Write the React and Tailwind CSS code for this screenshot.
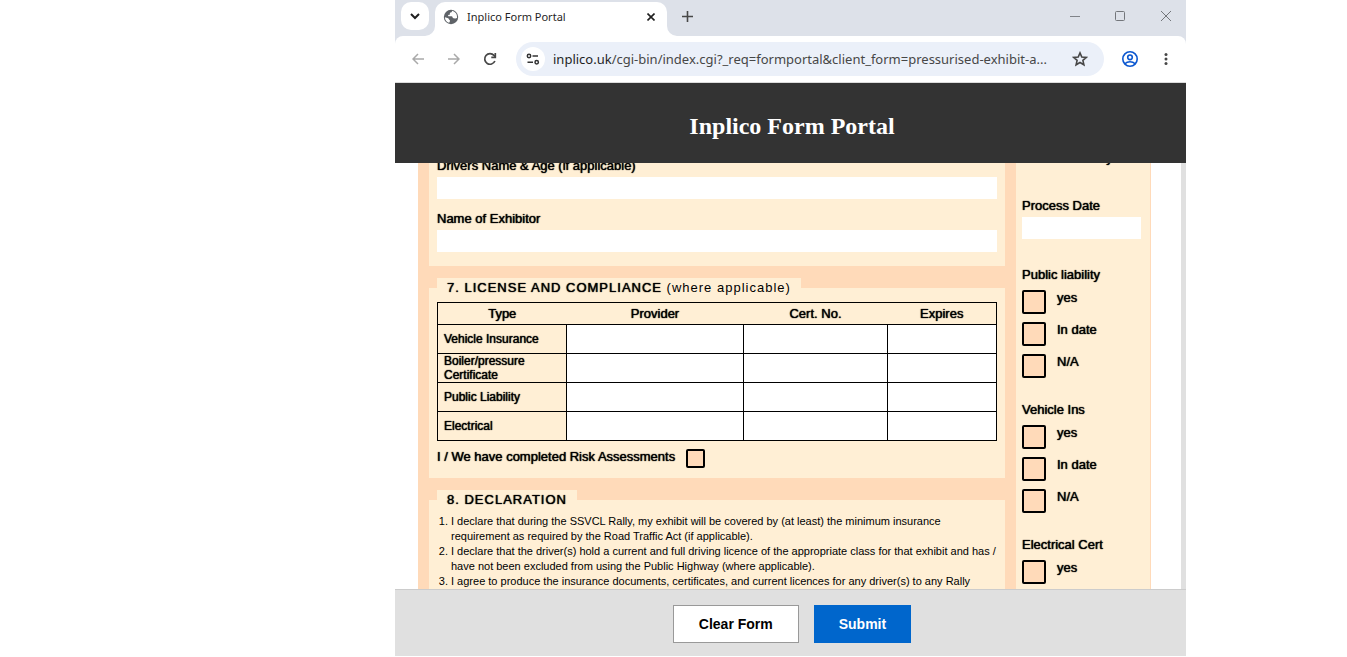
import React, { useState } from "react";

const certRows = ["Vehicle Insurance", "Boiler/pressure Certificate", "Public Liability", "Electrical"];

const certFields = ["Provider", "Cert. No.", "Expires"];

const officeChecks = ["Public liability", "Vehicle Ins", "Electrical Cert"];

const checkOptions = ["yes", "In date", "N/A"];

const declarations = [
  "I declare that during the SSVCL Rally, my exhibit will be covered by (at least) the minimum insurance requirement as required by the Road Traffic Act (if applicable).",
  "I declare that the driver(s) hold a current and full driving licence of the appropriate class for that exhibit and has / have not been excluded from using the Public Highway (where applicable).",
  "I agree to produce the insurance documents, certificates, and current licences for any driver(s) to any Rally",
];

const heavy = "[text-shadow:0_0_1px_#000,0_0_1px_#0006]";

const BrowserBar = () => (
  <div className="shrink-0 bg-[#dde1e9] font-['Noto_Sans',sans-serif]">
    <div className="flex h-9 items-start">
      <button aria-label="Search tabs" className="ml-[6px] mt-[2px] flex size-7 items-center justify-center rounded-[10px] bg-white">
        <svg width="10" height="7" viewBox="0 0 10 7" fill="none" stroke="#1f1f1f" strokeWidth="2">
          <path d="M1 1l4 4 4-4" />
        </svg>
      </button>
      <div className="flex h-9 items-end">
        <svg width="10" height="10" viewBox="0 0 10 10" className="-ml-1" fill="#fff">
          <path d="M10 0v10H0A10 10 0 0 0 10 0z" />
        </svg>
        <div className="flex h-[34px] w-[232px] items-center rounded-t-[10px] bg-white pb-1 pl-2 pr-[10px]">
          <svg width="16" height="16" viewBox="0 0 16 16">
            <circle cx="8" cy="8" r="7.2" fill="#5f6368" />
            <path
              d="M9.2 1.800c-.2 1.200-.8 1.700-1.700 1.800-.7.100-.7.800-.6 1.400 0 .7-.8.900-1.500.9-.6.300-.3 1.300.4 1.300h2.800c.8.1 1 .9 1.100 1.500.4.600 1.300.3 1.900.7.900.3 1.900 0 2.500-.7a6.400 6.400 0 0 0-4.900-6.900z"
              fill="#fff"
            />
            <path d="M1.900 8.300c1 .6 2.300.5 3.300 1 .9.500.6 1.300 1.300 1.700.7.400.6 1.200.2 1.700-.2.500-.5.900-.7 1.100A6.200 6.200 0 0 1 1.900 8.300z" fill="#fff" />
          </svg>
          <span className="ml-2 flex-1 text-[11px] leading-4 text-[#1f1f1f]">Inplico Form Portal</span>
          <button aria-label="Close tab" className="flex size-3 items-center justify-center">
            <svg width="8" height="8" viewBox="0 0 8 8" stroke="#1f1f1f" strokeWidth="1.600">
              <path d="M.5.5l7 7M7.500.5l-7 7" />
            </svg>
          </button>
        </div>
        <svg width="10" height="10" viewBox="0 0 10 10" fill="#fff">
          <path d="M0 0v10h10A10 10 0 0 1 0 0z" />
        </svg>
      </div>
      <button aria-label="New tab" className="flex h-8 w-5 items-center justify-center">
        <svg width="11" height="11" viewBox="0 0 11 11" stroke="#474747" strokeWidth="1.600">
          <path d="M5.500 0v11M0 5.500h11" />
        </svg>
      </button>
      <div className="ml-auto mr-[14px] flex h-8 items-center gap-[35px]">
        <button aria-label="Minimize">
          <svg width="10" height="10" viewBox="0 0 10 10" stroke="#808389">
            <path d="M0 5.500h10" />
          </svg>
        </button>
        <button aria-label="Maximize">
          <svg width="10" height="10" viewBox="0 0 10 10" fill="none" stroke="#73767b">
            <rect x=".5" y=".5" width="9" height="9" rx="1" />
          </svg>
        </button>
        <button aria-label="Close">
          <svg width="12" height="12" viewBox="0 0 12 12" stroke="#73767b">
            <path d="M1 1l10 10M11 1L1 11" />
          </svg>
        </button>
      </div>
    </div>

    <div className="flex h-[47px] items-center rounded-t-lg border-b border-[#dcdcdc] bg-white pl-[17px] pr-[14px]">
      <button aria-label="Back">
        <svg width="12" height="12" viewBox="0 0 12 12" fill="none" stroke="#a9a9a9" strokeWidth="1.500">
          <path d="M12 6H1M6 1L1 6l5 5" />
        </svg>
      </button>
      <button aria-label="Forward" className="ml-6">
        <svg width="12" height="12" viewBox="0 0 12 12" fill="none" stroke="#a9a9a9" strokeWidth="1.500">
          <path d="M0 6h11M6 1l5 5-5 5" />
        </svg>
      </button>
      <button aria-label="Reload" className="ml-[23px]">
        <svg width="14" height="14" viewBox="0 0 14 14" fill="none" stroke="#474747" strokeWidth="1.700">
          <path d="M11.900 9A5.300 5.300 0 1 1 11 3.400L12.600 5" />
          <path d="M12.300 1v4.300H8.300" />
        </svg>
      </button>
      <div className="ml-[19px] flex h-[34px] min-w-0 flex-1 items-center rounded-full bg-[#ebf0f9] pl-[5px] pr-4">
        <button aria-label="Site information" className="flex size-6 shrink-0 items-center justify-center rounded-full bg-white">
          <svg width="14" height="12" viewBox="0 0 14 12" fill="none" stroke="#333" strokeWidth="1.500">
            <circle cx="3" cy="3" r="1.700" />
            <path d="M6.500 3H12M1.500 9.300H7" />
            <circle cx="10.700" cy="9.300" r="1.700" />
          </svg>
        </button>
        <span className="ml-2 min-w-0 flex-1 truncate text-[13px] leading-5 text-[#474747]">
          <span className="text-[#1f1f1f]">inplico.uk</span>/cgi-bin/index.cgi?_req=formportal&amp;client_form=pressurised-exhibit-a...
        </span>
        <button aria-label="Bookmark this tab" className="ml-3">
          <svg width="16" height="16" viewBox="0 0 16 16" fill="none" stroke="#474747" strokeWidth="1.600">
            <path d="M8 1.900l1.800 4.100 4.500.4-3.400 3 1 4.400L8 11.500l-3.900 2.300 1-4.400-3.400-3 4.500-.4z" />
          </svg>
        </button>
      </div>
      <button aria-label="Profile" className="ml-[18px]">
        <svg width="16" height="16" viewBox="0 0 16 16" fill="none" stroke="#0b57d0" strokeWidth="1.600">
          <circle cx="8" cy="8" r="7.200" />
          <circle cx="8" cy="6.300" r="2.300" />
          <path d="M2.700 12.800c1.500-1.300 3.300-2 5.300-2s3.800.7 5.300 2" />
        </svg>
      </button>
      <button aria-label="Menu" className="ml-[22px]">
        <svg width="12" height="12" viewBox="0 0 12 12" fill="#474747">
          <circle cx="6" cy="1.500" r="1.500" />
          <circle cx="6" cy="6" r="1.500" />
          <circle cx="6" cy="10.500" r="1.500" />
        </svg>
      </button>
    </div>
  </div>
);

const TextField = ({ id, label }) => (
  <div className="flex flex-col gap-[3px]">
    <label htmlFor={id} className={`text-[13px] leading-4 ${heavy}`}>
      {label}
    </label>
    <input id={id} type="text" className="h-[22px] w-full bg-white px-1 text-[13px] outline-none" />
  </div>
);

const SectionTitle = ({ children }) => (
  <h2 className="-mt-[10px] self-start bg-[#ffefd5] px-[10px] text-[13px] leading-5 tracking-[1px]">{children}</h2>
);

const CertTable = () => (
  <table className="mt-1 w-full table-fixed border-collapse border border-black">
    <thead>
      <tr className={`h-[22px] text-[13px] leading-4 ${heavy}`}>
        <th className="w-[129px] font-normal">Type</th>
        <th className="w-[177px] font-normal">Provider</th>
        <th className="w-[144px] font-normal">Cert. No.</th>
        <th className="font-normal">Expires</th>
      </tr>
    </thead>
    <tbody>
      {certRows.map((row) => (
        <tr key={row} className="h-[29px]">
          <th scope="row" className={`border border-black px-[6px] py-0 text-left text-xs leading-[14px] font-normal ${heavy}`}>
            {row}
          </th>
          {certFields.map((f) => (
            <td key={f} className="border border-black bg-white p-0">
              <input type="text" aria-label={`${row} ${f}`} className="block h-7 w-full bg-white px-1 text-xs outline-none" />
            </td>
          ))}
        </tr>
      ))}
    </tbody>
  </table>
);

const OfficeCheck = ({ title }) => (
  <fieldset className="mb-6">
    <legend className={`mb-[7px] text-[13px] leading-4 ${heavy}`}>{title}</legend>
    <div className="flex flex-col gap-2">
      {checkOptions.map((o) => (
        <label key={o} className={`flex items-start gap-[11px] text-[13px] leading-4 ${heavy}`}>
          <input
            type="checkbox"
            className="size-6 appearance-none rounded-xs border-2 border-black bg-[#ffdab9] checked:bg-black"
          />
          {o}
        </label>
      ))}
    </div>
  </fieldset>
);

const App = () => {
  const [formKey, setFormKey] = useState(0);

  return (
    <div className="h-screen bg-white pb-px pl-[395px] pr-[161px] font-['Liberation_Sans',Arial,sans-serif] text-black">
      <div className="flex h-full flex-col overflow-hidden">
        <BrowserBar />

        <header className="flex h-20 shrink-0 items-center justify-center bg-[#333] pl-[3px] pt-[6px]">
          <h1 className="font-['Liberation_Serif',serif] text-2xl font-bold text-white">Inplico Form Portal</h1>
        </header>

        <main className="flex min-h-0 flex-1 overflow-hidden">
          <form
            key={formKey}
            id="portal-form"
            onSubmit={(e) => e.preventDefault()}
            className="-mt-[13px] ml-[23px] mr-[30px] flex flex-1 gap-[11px] self-start bg-[#ffdab9] pl-[11px] pr-px"
          >
            <div className="flex min-w-0 flex-1 flex-col gap-[22px]">
              <section className="flex flex-col gap-3 bg-[#ffefd5] px-2 pb-[14px] pt-2">
                <TextField id="driver" label="Drivers Name & Age (if applicable)" />
                <TextField id="exhibitor" label="Name of Exhibitor" />
              </section>

              <section className="flex flex-col bg-[#ffefd5] px-2 pb-[10px]">
                <SectionTitle>
                  <span className={heavy}>7. LICENSE AND COMPLIANCE</span> (where applicable)
                </SectionTitle>
                <CertTable />
                <div className="mt-2 flex items-start gap-[11px]">
                  <label htmlFor="risk" className={`text-[13px] leading-4 ${heavy}`}>
                    I / We have completed Risk Assessments
                  </label>
                  <input
                    id="risk"
                    type="checkbox"
                    className="size-[19px] appearance-none rounded-xs border-2 border-black bg-[#ffdab9] checked:bg-black"
                  />
                </div>
              </section>

              <section className="flex flex-col bg-[#ffefd5] px-2 pb-4">
                <SectionTitle>
                  <span className={heavy}>8. DECLARATION</span>
                </SectionTitle>
                <ol className="mt-1 list-decimal pl-[14px] text-[11px] leading-[15px]">
                  {declarations.map((d) => (
                    <li key={d}>{d}</li>
                  ))}
                </ol>
              </section>
            </div>

            <aside className="flex w-[134px] shrink-0 flex-col bg-[#ffefd5] pl-[6px] pr-[9px]">
              <p className={`mb-8 text-[13px] leading-4 ${heavy}`}>Office Use Only</p>
              <TextField id="process-date" label="Process Date" />
              <div className="mt-7">
                {officeChecks.map((c) => (
                  <OfficeCheck key={c} title={c} />
                ))}
              </div>
            </aside>
          </form>
          <div className="w-[5px] shrink-0 bg-[#e0e0e0]" />
        </main>

        <footer className="flex h-[67px] shrink-0 items-start justify-center gap-[15px] border-t border-[#ccc] bg-[#e0e0e0] pl-[3px] pt-[15px] text-sm font-bold">
          <button
            type="button"
            onClick={() => setFormKey((k) => k + 1)}
            className="h-[38px] border border-[#999] bg-white px-[25px]"
          >
            Clear Form
          </button>
          <button type="submit" form="portal-form" className="h-[38px] bg-[#0066cc] px-[25px] text-white">
            Submit
          </button>
        </footer>
      </div>
    </div>
  );
};

export default App;
